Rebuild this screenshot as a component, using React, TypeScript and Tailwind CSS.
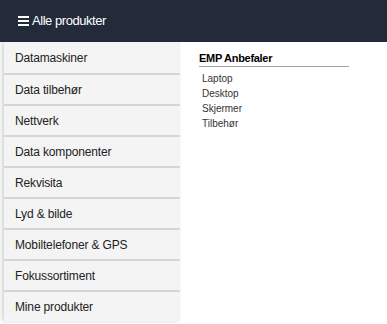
import React from 'react';

const categories = [
  'Datamaskiner',
  'Data tilbehør',
  'Nettverk',
  'Data komponenter',
  'Rekvisita',
  'Lyd & bilde',
  'Mobiltelefoner & GPS',
  'Fokussortiment',
  'Mine produkter',
];

const recommended = ['Laptop', 'Desktop', 'Skjermer', 'Tilbehør'];

const App: React.FC = () => {
  return (
    <div className="w-[387px] h-[324px] overflow-hidden bg-white font-['Liberation_Sans',Arial,sans-serif]">
      {/* Header */}
      <div className="h-[42px] bg-[#232b3b] flex items-center pl-[18px] text-white">
        <svg width="11" height="10" viewBox="0 0 11 10" className="mr-[3px]">
          <rect x="0" y="0" width="11" height="2" fill="white" />
          <rect x="0" y="4" width="11" height="2" fill="white" />
          <rect x="0" y="8" width="11" height="2" fill="white" />
        </svg>
        <span className="text-[13px] tracking-[-0.45px]">Alle produkter</span>
      </div>

      <div className="flex">
        {/* Category list */}
        <div className="ml-[4px] w-[176px] bg-[#f4f4f4] shadow-[-2px_0_4px_rgba(0,0,0,0.18)]">
          {categories.map((c, i) => (
            <div
              key={c}
              className={`h-[31px] flex items-center pl-[11px] pt-[1px] text-[12px] tracking-[-0.15px] text-[#222] ${
                i > 0 ? 'border-t-2 border-[#d6d6d6]' : ''
              }`}
            >
              {c}
            </div>
          ))}
        </div>

        {/* Recommendations */}
        <div className="pl-[19px] pt-[10px]">
          <div className="w-[150px] border-b border-[#a0a0a0] pb-[2px] text-[11px] leading-[12px] font-bold tracking-[-0.3px] text-black">
            EMP Anbefaler
          </div>
          <div className="mt-[4px] pl-[3px]">
            {recommended.map((r) => (
              <div key={r} className="h-[15px] text-[10px] leading-[15px] text-[#333]">
                {r}
              </div>
            ))}
          </div>
        </div>
      </div>
    </div>
  );
};

export default App;
